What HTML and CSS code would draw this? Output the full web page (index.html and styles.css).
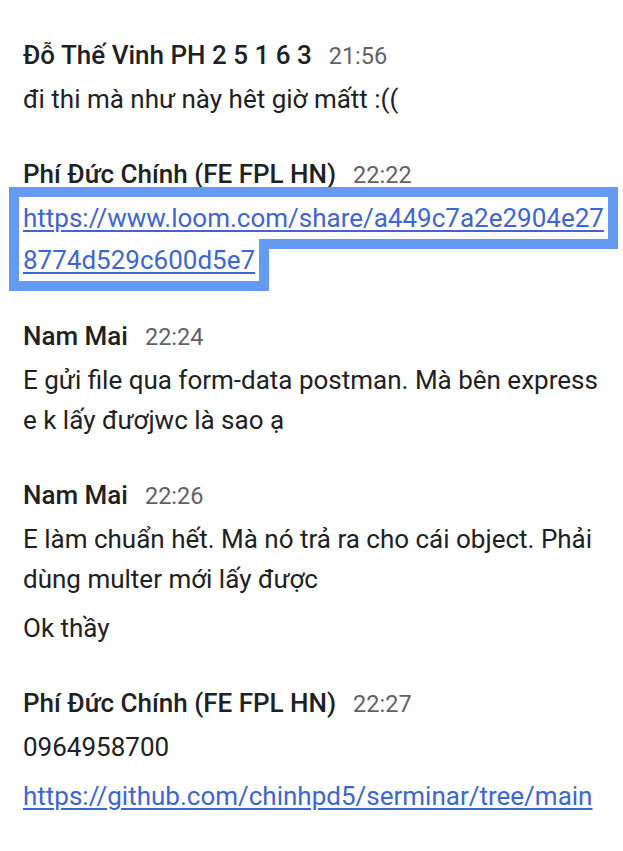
FILE: index.html
```html
<!DOCTYPE html>
<html lang="vi">
<head>
<meta charset="utf-8">
<link rel="stylesheet" href="styles.css">
</head>
<body>
<div class="feed">
  <div class="msg">
    <div class="hdr"><span class="name">Đỗ Thế Vinh PH 2 5 1 6 3</span><span class="time">21:56</span></div>
    <p class="txt">đi thi mà như này hêt giờ mấtt :((</p>
  </div>
  <div class="msg">
    <div class="hdr"><span class="name">Phí Đức Chính (FE FPL HN)</span><span class="time">22:22</span></div>
    <p class="txt linkline"><a class="link focused" href="#">https://www.loom.com/share/a449c7a2e2904e278774d529c600d5e7</a></p>
  </div>
  <div class="msg">
    <div class="hdr"><span class="name">Nam Mai</span><span class="time">22:24</span></div>
    <p class="txt">E gửi file qua form-data postman. Mà bên express e k lấy đươjwc là sao ạ</p>
  </div>
  <div class="msg">
    <div class="hdr"><span class="name">Nam Mai</span><span class="time">22:26</span></div>
    <p class="txt">E làm chuẩn hết. Mà nó trả ra cho cái object. Phải dùng multer mới lấy được</p>
    <p class="txt">Ok thầy</p>
  </div>
  <div class="msg">
    <div class="hdr"><span class="name">Phí Đức Chính (FE FPL HN)</span><span class="time">22:27</span></div>
    <p class="txt">0964958700</p>
    <p class="txt"><a class="link" href="#">https://github.com/chinhpd5/serminar/tree/main</a></p>
  </div>
</div>
</body>
</html>
```
FILE: styles.css
```css
html, body {
  margin: 0;
  padding: 0;
  background: #ffffff;
}
body {
  font-family: Roboto, "Noto Sans", sans-serif;
  color: #202124;
}
.feed {
  display: flex;
  flex-direction: column;
  gap: 35px;
  padding: 35px 15px 0 23px;
}
.msg {
  display: flex;
  flex-direction: column;
  gap: 4px;
}
.hdr {
  display: flex;
  align-items: baseline;
  gap: 17px;
  line-height: 40px;
  height: 40px;
}
.name {
  font-size: 26px;
  font-weight: 500;
  color: #202124;
}
.time {
  font-size: 23.5px;
  color: #5f6368;
}
.txt {
  margin: 0;
  font-size: 26px;
  line-height: 40px;
}
.txt + .txt {
  margin-top: 5px;
}
.linkline {
  line-height: 42px;
  word-break: break-all;
  margin: -1px -7px 0 -4px;
}
.link {
  color: #3d66d3;
  text-decoration: underline;
  text-underline-offset: 3px;
}
.focused {
  padding: 6px 4px;
  -webkit-box-decoration-break: clone;
  box-decoration-break: clone;
  outline: 10px solid #6699f0;
}
```
